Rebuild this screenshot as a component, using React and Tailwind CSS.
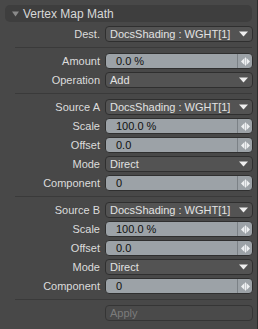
import React from "react";

const Spin = () => (
  <div className="flex h-full w-[15px] items-center justify-center border-l border-[#7b8186]">
    <svg width="9" height="9" viewBox="0 0 9 9">
      <polygon points="0,4.5 3.5,1 3.5,8" fill="#eef0f2" />
      <rect x="4" y="0.5" width="1" height="8" fill="#eef0f2" />
      <polygon points="5.5,1 9,4.5 5.5,8" fill="#eef0f2" />
    </svg>
  </div>
);

const Arrow = () => (
  <svg width="9" height="6" viewBox="0 0 9 6" className="mr-[4px]">
    <polygon points="0,0.5 9,0.5 4.5,5.5" fill="#eeeeee" />
  </svg>
);

const Row = ({ label, children }) => (
  <div className="flex h-[16px] items-center">
    <div className="w-[100px] text-right text-[#dcdcdc]">{label}</div>
    <div className="ml-[5px] h-full w-[148px]">{children}</div>
  </div>
);

const Drop = ({ value }) => (
  <div className="flex h-full items-center justify-between rounded-[4px] border border-[#2f2f2f] bg-[#535353] pl-[4px] text-[#e2e2e2]">
    <span className="leading-none">{value}</span>
    <Arrow />
  </div>
);

const Num = ({ value }) => (
  <div className="flex h-full items-center justify-between rounded-[4px] border border-[#2f2f2f] bg-[#9ca2a7] text-[#101010]">
    <span className="pl-[10px] leading-none">{value}</span>
    <Spin />
  </div>
);

const Sep = () => <div className="ml-[15px] mr-[5px] mt-[5px] mb-[5px] h-px bg-[#3a3a3a]" />;

export default function App() {
  return (
    <div
      className="relative h-[329px] w-[258px] overflow-hidden border-r border-[#2e2e2e] bg-[#484848] text-[11px]"
      style={{ fontFamily: '"Liberation Sans", Arial, sans-serif' }}
    >
      <div className="mx-[5px] mt-[5px] flex h-[17px] items-center rounded-[5px] bg-[#3e3e3e]">
        <svg width="7" height="6" viewBox="0 0 7 6" className="ml-[7px] mr-[4px]">
          <polygon points="0,0.5 7,0.5 3.5,5.5" fill="#8a8a8a" />
        </svg>
        <span className="text-[12px] text-[#d8d8d8]">Vertex Map Math</span>
      </div>
      <div className="mt-[4px] flex flex-col">
        <Row label="Dest."><Drop value="DocsShading : WGHT[1]" /></Row>
        <Sep />
        <div className="flex flex-col gap-[3px]">
          <Row label="Amount"><Num value="0.0 %" /></Row>
          <Row label="Operation"><Drop value="Add" /></Row>
        </div>
        <Sep />
        <div className="flex flex-col gap-[3px]">
          <Row label="Source A"><Drop value="DocsShading : WGHT[1]" /></Row>
          <Row label="Scale"><Num value="100.0 %" /></Row>
          <Row label="Offset"><Num value="0.0" /></Row>
          <Row label="Mode"><Drop value="Direct" /></Row>
          <Row label="Component"><Num value="0" /></Row>
        </div>
        <Sep />
        <div className="flex flex-col gap-[3px]">
          <Row label="Source B"><Drop value="DocsShading : WGHT[1]" /></Row>
          <Row label="Scale"><Num value="100.0 %" /></Row>
          <Row label="Offset"><Num value="0.0" /></Row>
          <Row label="Mode"><Drop value="Direct" /></Row>
          <Row label="Component"><Num value="0" /></Row>
        </div>
        <Sep />
        <Row label="">
          <div className="flex h-full items-center rounded-[4px] border border-[#353535] bg-[#4a4a4a] pl-[4px] text-[#7c7c7c]">
            Apply
          </div>
        </Row>
      </div>
    </div>
  );
}
